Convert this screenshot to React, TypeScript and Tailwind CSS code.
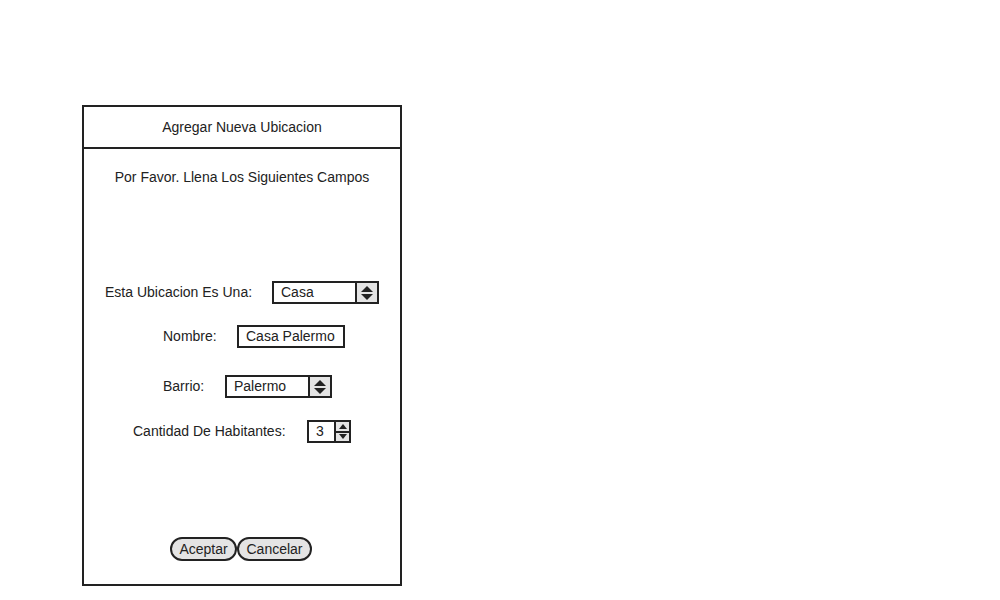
import React from 'react';

function UpDownArrows() {
  return (
    <svg width="14" height="16" viewBox="0 0 14 16">
      <path d="M7 1 L13 7 L1 7 Z" fill="#222" />
      <path d="M1 9 L13 9 L7 15 Z" fill="#222" />
    </svg>
  );
}

function Select({ value, width }: { value: string; width: string }) {
  return (
    <div className={`flex h-[23px] ${width} border-2 border-[#222] bg-white`}>
      <div className="flex-1 pl-[7px] leading-[19px]">{value}</div>
      <div className="flex w-[22px] items-center justify-center border-l-2 border-[#222] bg-[#e4e4e4]">
        <UpDownArrows />
      </div>
    </div>
  );
}

function Spinner({ value }: { value: number }) {
  return (
    <div className="flex h-[23px] w-[44px] border-2 border-[#222] bg-white">
      <div className="flex-1 pl-[7px] leading-[19px]">{value}</div>
      <div className="flex w-[15px] flex-col border-l-2 border-[#222] bg-[#e4e4e4]">
        <div className="flex flex-1 items-center justify-center">
          <svg width="8" height="5" viewBox="0 0 8 5">
            <path d="M4 0 L8 5 L0 5 Z" fill="#222" />
          </svg>
        </div>
        <div className="h-[2px] bg-[#222]" />
        <div className="flex flex-1 items-center justify-center">
          <svg width="8" height="5" viewBox="0 0 8 5">
            <path d="M0 0 L8 0 L4 5 Z" fill="#222" />
          </svg>
        </div>
      </div>
    </div>
  );
}

export default function App() {
  return (
    <div
      className="min-h-screen w-[1000px] bg-white pl-[82px] pt-[105px] text-[14px] text-[#222]"
      style={{ fontFamily: '"Liberation Sans", Arial, sans-serif' }}
    >
      <div className="flex h-[481px] w-[320px] flex-col border-2 border-[#222]">
        {/* header */}
        <div className="flex h-[42px] items-center justify-center border-b-2 border-[#222] pb-[1px] leading-[16px]">
          Agregar Nueva Ubicacion
        </div>

        <div className="pt-[20px] text-center leading-[16px]">
          Por Favor. Llena Los Siguientes Campos
        </div>

        {/* form rows */}
        <div className="mt-[96px] flex flex-col">
          <div className="flex items-center pl-[21px]">
            <span className="w-[167px]">Esta Ubicacion Es Una:</span>
            <Select value="Casa" width="w-[107px]" />
          </div>

          <div className="mt-[21px] flex items-center pl-[79px]">
            <span className="w-[74px]">Nombre:</span>
            <div className="h-[23px] w-[108px] border-2 border-[#222] bg-white pl-[7px] leading-[19px]">
              Casa Palermo
            </div>
          </div>

          <div className="mt-[27px] flex items-center pl-[79px]">
            <span className="w-[62px]">Barrio:</span>
            <Select value="Palermo" width="w-[107px]" />
          </div>

          <div className="mt-[22px] flex items-center pl-[49px]">
            <span className="w-[174px]">Cantidad De Habitantes:</span>
            <Spinner value={3} />
          </div>
        </div>

        {/* actions */}
        <div className="mt-[94px] flex justify-center pr-[2px]">
          <button className="h-[24px] w-[67px] rounded-full border-2 border-[#222] bg-[#e4e4e4] leading-[18px]">
            Aceptar
          </button>
          <button className="h-[24px] w-[75px] rounded-full border-2 border-[#222] bg-[#e4e4e4] leading-[18px]">
            Cancelar
          </button>
        </div>
      </div>
    </div>
  );
}
